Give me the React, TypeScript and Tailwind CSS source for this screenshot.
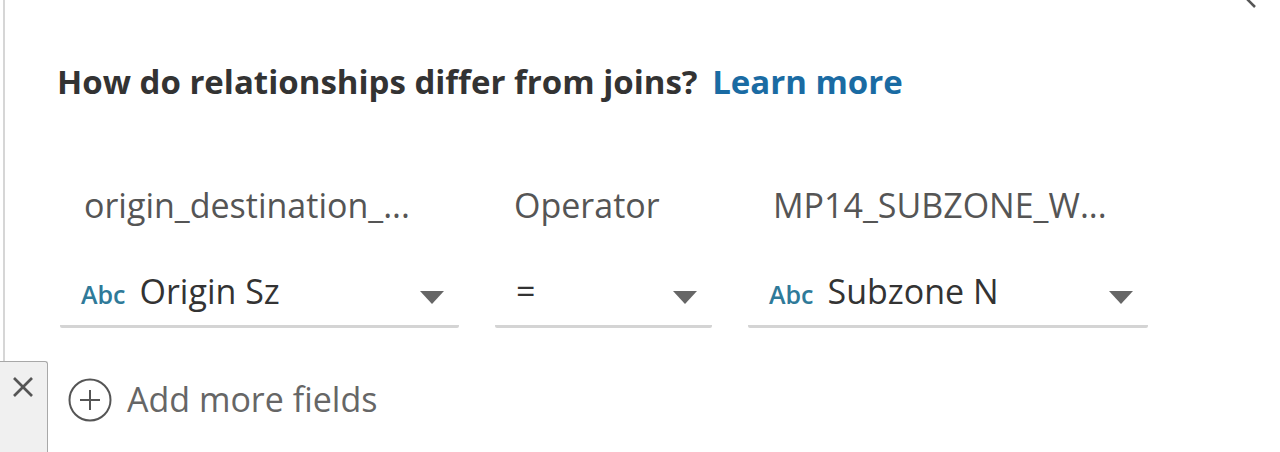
const font = "font-['Open_Sans','Liberation_Sans',sans-serif]";

const Caret = () => (
    <svg width="24" height="14" viewBox="0 0 24 14" className="shrink-0 self-center mt-[4px]">
        <polygon points="0,0 24,0 12,13" fill="#666666" />
    </svg>
);

const Abc = () => (
    <span className="text-[25px] font-semibold text-[#2f7a99] mr-[14px]">Abc</span>
);

type FieldProps = {
    width: string;
    label: string;
    labelPad: string;
    value: string;
    typed?: boolean;
};

const Field = ({ width, label, labelPad, value, typed }: FieldProps) => (
    <div className={`${width} flex flex-col`}>
        <div className={`${labelPad} h-[44px] flex items-center text-[34px] text-[#555555] whitespace-nowrap`}>
            {label}
        </div>
        <div className="mt-[39px] h-[62px] flex items-baseline pl-[21px] pr-[15px] border-b-[3px] border-[#d4d4d4] rounded-b-[2px]">
            {typed && <Abc />}
            <span className="text-[34px] text-[#333333] flex-1">{value}</span>
            <Caret />
        </div>
    </div>
);

const App = () => {
    return (
        <div className={`relative w-[1280px] h-[452px] bg-white overflow-hidden ${font}`}>
            <div className="h-[361px] ml-[3px] border-l-2 border-[#d6d6d6]">
                <div className="pl-[52px] pt-[60px]">
                    <h2 className="text-[33px] font-bold text-[#333333] leading-[44px] whitespace-nowrap">
                        How do relationships differ from joins?{' '}
                        <a href="#" className="ml-[6px] text-[#1a6ba3]">Learn more</a>
                    </h2>

                    <div className="mt-[79px] ml-[3px] flex gap-[36px]">
                        <Field width="w-[399px]" label="origin_destination_..." labelPad="pl-[24px]" value="Origin Sz" typed />
                        <Field width="w-[217px]" label="Operator" labelPad="pl-[19px]" value="=" />
                        <Field width="w-[400px]" label="MP14_SUBZONE_W..." labelPad="pl-[25px]" value="Subzone N" typed />
                    </div>
                </div>
            </div>

            <div className="absolute left-[68px] top-[374px] flex items-center gap-[15px]">
                <svg width="44" height="44" viewBox="0 0 44 44">
                    <circle cx="22" cy="22" r="20.5" fill="none" stroke="#555555" strokeWidth="2" />
                    <line x1="12" y1="22" x2="32" y2="22" stroke="#555555" strokeWidth="2" />
                    <line x1="22" y1="12" x2="22" y2="32" stroke="#555555" strokeWidth="2" />
                </svg>
                <span className="text-[34px] text-[#666666]">Add more fields</span>
            </div>

            <div className="absolute left-0 top-[361px] w-[48px] h-[100px] bg-[#f0f0f0] border-t border-r border-[#a8a8a8] rounded-tr-[3px] flex justify-center pt-[14px] pr-[2px]">
                <svg width="22" height="22" viewBox="0 0 22 22">
                    <line x1="2" y1="2" x2="20" y2="20" stroke="#555555" strokeWidth="2.6" />
                    <line x1="20" y1="2" x2="2" y2="20" stroke="#555555" strokeWidth="2.6" />
                </svg>
            </div>

            <svg className="absolute left-[1240px] top-0" width="20" height="10" viewBox="0 0 20 10">
                <line x1="5" y1="-3" x2="15" y2="7" stroke="#555555" strokeWidth="2.5" />
            </svg>
        </div>
    );
};

export default App;
